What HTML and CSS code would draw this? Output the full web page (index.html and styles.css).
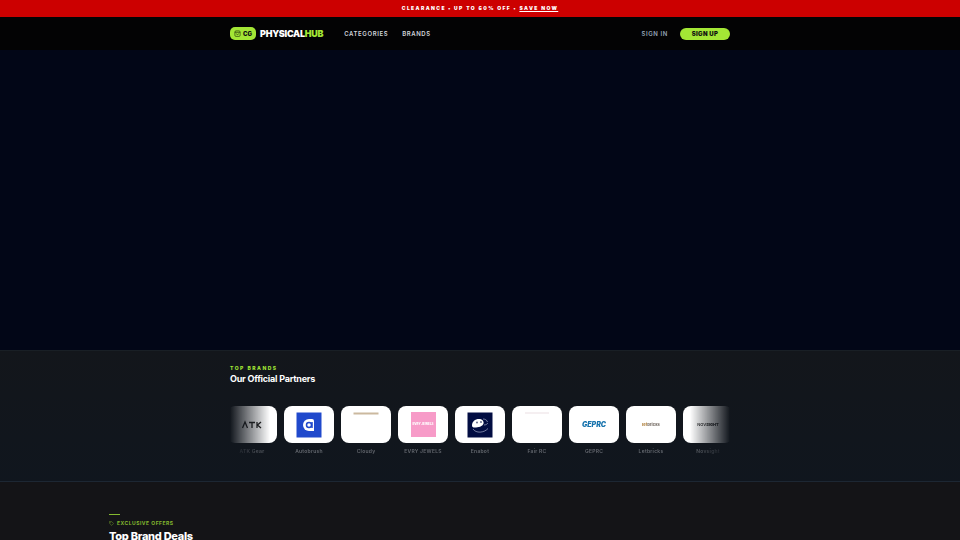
FILE: index.html
```
<!DOCTYPE html>
<html lang="en">
<head>
    <meta charset="UTF-8">
    <meta name="viewport" content="width=device-width, initial-scale=1.0">
    <title>PhysicalHub</title>
    <link rel="stylesheet" href="styles.css">
</head>
<body>
    <div class="promo">CLEARANCE • UP TO 60% OFF • <a href="#deals">SAVE NOW</a></div>
    <header class="header">
        <div class="container nav">
            <a class="brand" href="#">
                <span class="badge">
                    <svg class="bag" viewBox="0 0 24 24"><rect x="3" y="3" width="18" height="19" rx="4"/><path d="M3 8h18M8 12c0 5 8 5 8 0"/></svg>
                    CG
                </span>
                <span class="name">PHYSICAL<span class="accent">HUB</span></span>
            </a>
            <nav class="links">
                <a href="#categories">CATEGORIES</a>
                <a href="#brands">BRANDS</a>
            </nav>
            <div class="account">
                <a class="signin" href="#signin">SIGN IN</a>
                <button class="signup" type="button">SIGN UP</button>
            </div>
        </div>
    </header>
    <section class="hero"></section>
    <section class="partners" id="brands">
        <div class="container">
            <p class="eyebrow">TOP BRANDS</p>
            <h2 class="partners-title">Our Official Partners</h2>
            <div class="track">
                <a class="partner" href="#">
                    <span class="logo">
                        <svg viewBox="0 0 50 36"><path class="atk" d="M15.500 21l2.500-6 2.500 6M22 15.500h6M25 15.500V21M30 15v6M34 15l-3.500 3L34 21"/></svg>
                    </span>
                    ATK Gear
                </a>
                <a class="partner" href="#">
                    <span class="logo">
                        <svg viewBox="0 0 50 36"><path fill="#2049cc" d="M12.500 5.500h25v25h-25z"/><path fill="#fff" d="M25 12h3q2 0 2 2v10h-5a6 6 0 0 1 0-12z"/><circle cx="25" cy="18" r="2.500" fill="none" stroke="#2049cc" stroke-width="1.500"/><path d="M28 15v6" stroke="#2049cc" stroke-width="1.500"/></svg>
                    </span>
                    Autobrush
                </a>
                <a class="partner" href="#">
                    <span class="logo">
                        <svg viewBox="0 0 50 36"><path fill="#cbb99f" d="M12.500 5.500h25v2h-25z"/></svg>
                    </span>
                    Cloudy
                </a>
                <a class="partner" href="#">
                    <span class="logo"><span class="tile">EVRY JEWELS</span></span>
                    EVRY JEWELS
                </a>
                <a class="partner" href="#">
                    <span class="logo">
                        <svg viewBox="0 0 50 36"><path fill="#020d42" d="M12.500 5.500h25v25h-25z"/><path fill="#fff" d="M17 18.500c0-4 3-6.500 7-6.500 3 0 5 2 4.500 4.500-1 3-5 4-9 4-1.500 0-2.500-.5-2.500-2z"/><path d="M18 22c3 4.500 11 4 15-.5M28 12c2 0 4 1 4.500 3M29 18c2 0 3-1 4-2" fill="none" stroke="#c3c9e0" stroke-width=".6"/><ellipse cx="22" cy="15.500" rx=".6" ry="1" fill="#020d42"/><ellipse cx="26" cy="15" rx=".6" ry="1" fill="#020d42"/></svg>
                    </span>
                    Enabot
                </a>
                <a class="partner" href="#">
                    <span class="logo">
                        <svg viewBox="0 0 50 36"><path fill="#eadfe2" d="M13 5.500h24v1H13z"/></svg>
                    </span>
                    Fair RC
                </a>
                <a class="partner" href="#">
                    <span class="logo geprc">GEPRC</span>
                    GEPRC
                </a>
                <a class="partner" href="#">
                    <span class="logo letbricks"><span>let<b>bricks</b></span></span>
                    Letbricks
                </a>
                <a class="partner" href="#">
                    <span class="logo novsight"><span>NOV<b>SIGHT</b></span></span>
                    Novsight
                </a>
            </div>
        </div>
    </section>
    <section class="deals" id="deals">
        <div class="offers">
            <svg class="tag" viewBox="0 0 24 24"><path d="M2 2h10l10 10-9 9L2 11z"/><circle cx="8" cy="8" r="1"/></svg>
            EXCLUSIVE OFFERS
        </div>
        <h2 class="deals-title">Top Brand Deals</h2>
    </section>
</body>
</html>
```
FILE: styles.css
```
* {
    box-sizing: border-box;
}
body {
    font-family: Inter, "Liberation Sans", sans-serif;
    background-color: #141417;
    color: #fff;
    margin: 0;
    height: 100vh;
    overflow: hidden;
}
a {
    color: inherit;
    text-decoration: none;
}
.container {
    width: 500px;
    max-width: 100%;
    margin: 0 auto;
}
.promo {
    background-color: #cc0000;
    text-align: center;
    font-size: 5px;
    font-weight: 900;
    letter-spacing: 0.28em;
    line-height: 17px;
}
.promo a {
    text-decoration: underline;
}
.header {
    background-color: #030304;
    padding: 8px 0;
}
.nav {
    display: flex;
    align-items: center;
    height: 17px;
}
.brand {
    display: flex;
    align-items: center;
    gap: 4px;
}
.badge {
    display: flex;
    align-items: center;
    gap: 2px;
    height: 13px;
    padding: 0 4px;
    border-radius: 5px;
    background-color: #a3e635;
    color: #111;
    font-size: 6px;
    font-weight: 900;
}
.bag {
    width: 7px;
    height: 7px;
    fill: none;
    stroke: #18200a;
    stroke-width: 2;
}
.name {
    font-size: 9px;
    font-weight: 900;
    letter-spacing: -0.03em;
}
.accent {
    color: #a3e635;
}
.links {
    display: flex;
    gap: 14px;
    margin-left: 21px;
    color: #d1d5db;
    font-size: 6px;
    font-weight: 600;
    letter-spacing: 0.1em;
}
.account {
    display: flex;
    align-items: center;
    gap: 12px;
    margin-left: auto;
}
.signin {
    color: #94a3b8;
    font-size: 6px;
    font-weight: 600;
    letter-spacing: 0.1em;
}
.signup {
    width: 50px;
    height: 12px;
    padding: 0;
    border: 0;
    border-radius: 6px;
    background-color: #a3e635;
    color: #111;
    font-family: inherit;
    font-size: 6px;
    font-weight: 900;
    letter-spacing: 0.05em;
    cursor: pointer;
}
.hero {
    height: 300px;
    background-color: #020617;
}
.partners {
    padding: 15px 0 27px;
    border-top: 1px solid #191f25;
    border-bottom: 1px solid #1d2733;
    background-image: linear-gradient(#13161b, #10161e);
}
.eyebrow {
    margin: 0;
    color: #a3e635;
    font-size: 5px;
    font-weight: 800;
    letter-spacing: 0.3em;
    line-height: 5px;
}
.partners-title {
    margin: 2px 0 21px;
    font-size: 9px;
    font-weight: 700;
    letter-spacing: -0.025em;
    line-height: 12px;
}
.track {
    display: flex;
    justify-content: center;
    gap: 7px;
    overflow: hidden;
    mask-image: linear-gradient(90deg, transparent, #000 8%, #000 92%, transparent);
}
.partner {
    flex: 0 0 50px;
    color: #64686f;
    font-size: 5px;
    font-weight: 600;
    letter-spacing: 0.05em;
    line-height: 6px;
    text-align: center;
}
.logo {
    display: flex;
    align-items: center;
    justify-content: center;
    height: 37px;
    margin-bottom: 5px;
    border-radius: 8px;
    background-color: #fff;
    letter-spacing: 0;
}
.logo svg {
    width: 50px;
    height: 36px;
}
.atk {
    fill: none;
    stroke: #222;
    stroke-width: 1.3;
}
.tile {
    width: 25px;
    background-color: #f79bc8;
    color: #fff;
    font-size: 3px;
    font-weight: 800;
    line-height: 25px;
}
.geprc {
    color: #1773ad;
    font-size: 7px;
    font-style: italic;
    font-weight: 900;
}
.letbricks {
    color: #b99055;
    font-size: 4px;
    font-weight: 900;
}
.letbricks b {
    color: #89817b;
}
.novsight {
    color: #333;
    font-size: 4px;
}
.novsight b {
    font-weight: 900;
}
.deals {
    padding: 32px 109px 0;
}
.deals::before {
    content: "";
    display: block;
    width: 11px;
    height: 1px;
    margin-bottom: 5px;
    background-color: #84b92f;
}
.offers {
    display: flex;
    align-items: center;
    gap: 3px;
    color: #84b92f;
    font-size: 5px;
    font-weight: 700;
    letter-spacing: 0.1em;
    line-height: 6px;
}
.tag {
    width: 5px;
    height: 5px;
    fill: none;
    stroke: #84b92f;
    stroke-width: 2;
}
.deals-title {
    margin: 2px 0 0;
    font-size: 11px;
    font-weight: 800;
    line-height: 16px;
    letter-spacing: -0.025em;
}
```
